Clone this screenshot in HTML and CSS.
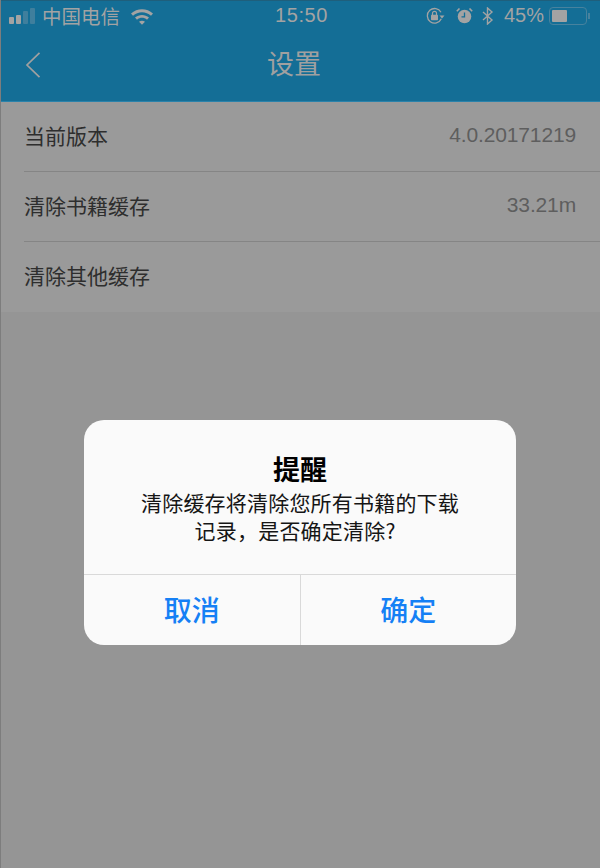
FILE: index.html
```html
<!DOCTYPE html>
<html>
  <head>
    <meta charset="utf-8">
    <title>设置</title>
    <link rel="stylesheet" href="styles.css">
  </head>

  <body>
    <div class="pagina">
      <div class="cabecera">
        <div class="estado">
          <div class="estado-izq">
            <div class="senal">
              <i class="on"></i><i class="on"></i><i class="off b3"></i><i class="off b4"></i>
            </div>
            <span class="operador">中国电信</span>
            <svg class="wifi" width="24" height="18" viewBox="0 0 24 18">
              <path d="M1 6.5C7 .8 17 .8 23 6.5l-2 2.2C16 4 8 4 3 8.7z" fill="#a3a3a3"/>
              <path d="M5 10.6c4-3.6 10-3.6 14 0l-2 2.1c-3-2.6-7-2.6-10 0z" fill="#a3a3a3"/>
              <path d="M9 14.7c1.800-1.400 4.200-1.400 6 0l-3 3z" fill="#a3a3a3"/>
            </svg>
          </div>
          <span class="hora">15:50</span>
          <div class="estado-der">
            <svg class="rotacion" width="19" height="18" viewBox="0 0 19 18">
              <path d="M15.300 11.800A7.300 7.300 0 1 1 15 5.200" fill="none" stroke="#a3a3a3" stroke-width="1.300"/>
              <path d="M13.500 8.500h5l-2.500 3z" fill="#a3a3a3"/>
              <rect x="5" y="7.800" width="7" height="5.400" rx=".8" fill="#a3a3a3"/>
              <path d="M6.500 8V6.300a2 2 0 0 1 4 0V8" fill="none" stroke="#a3a3a3" stroke-width="1.200"/>
            </svg>
            <svg class="alarma" width="17" height="17" viewBox="0 0 17 17">
              <circle cx="8.500" cy="9.500" r="6.800" fill="#a3a3a3"/>
              <path d="M8.500 5.500v4.300H5.500" fill="none" stroke="#146e96" stroke-width="1.300"/>
              <path d="M.8 4.300 3.500 1.500M16.200 4.300 13.500 1.500" stroke="#a3a3a3" stroke-width="1.600"/>
            </svg>
            <svg class="bluetooth" width="12" height="18" viewBox="0 0 12 18">
              <path d="M1 5l9 8-4.500 4V1L10 5l-9 8" fill="none" stroke="#a3a3a3" stroke-width="1.400"/>
            </svg>
            <span class="bateria-txt">45%</span>
            <div class="bateria">
              <div class="bateria-caja"><div class="bateria-nivel"></div></div>
              <div class="bateria-punta"></div>
            </div>
          </div>
        </div>
        <div class="barra">
          <svg class="atras" width="16" height="26" viewBox="0 0 16 26">
            <path d="M14.500 .8 2 13l12.500 12.200" fill="none" stroke="#a0a0a0" stroke-width="1.700"/>
          </svg>
          <span class="titulo">设置</span>
        </div>
      </div>

      <div class="lista">
        <div class="fila">
          <span>当前版本</span>
          <span class="valor">4.0.20171219</span>
        </div>
        <div class="fila">
          <span>清除书籍缓存</span>
          <span class="valor">33.21m</span>
        </div>
        <div class="fila">
          <span>清除其他缓存</span>
        </div>
      </div>

      <div class="capa">
        <div class="dialogo">
          <div class="dialogo-texto">
            <div class="dialogo-titulo">提醒</div>
            <div class="dialogo-msg">清除缓存将清除您所有书籍的下载<br>记录，是否确定清除?&nbsp;&nbsp;</div>
          </div>
          <div class="dialogo-botones">
            <div class="boton">取消</div>
            <div class="boton">确定</div>
          </div>
        </div>
      </div>
    </div>
  </body>
</html>
```

FILE: styles.css
```css
* {
  box-sizing: border-box;
}
html, body {
  margin: 0;
  padding: 0;
}
body {
  font-family: "Noto Sans CJK SC", "Liberation Sans", sans-serif;
  background-color: #959595;
}
.pagina {
  position: relative;
  width: 600px;
  height: 868px;
  overflow: hidden;
  border-left: 1px solid #7d7d7d;
}
.cabecera {
  height: 102px;
  background-color: #146e96;
  border-top: 1px solid #1f5f7c;
  border-bottom: 1px solid #2a82aa;
}
.estado {
  position: relative;
  display: flex;
  justify-content: space-between;
  align-items: center;
  height: 29px;
  padding: 0 10px 0 8px;
  color: #a3a3a3;
}
.estado-izq, .estado-der {
  display: flex;
  align-items: center;
}
.senal {
  display: flex;
  align-items: flex-end;
  gap: 2px;
  height: 17px;
  margin-right: 7px;
}
.senal i {
  display: block;
  width: 5px;
  border-radius: 1px;
}
.senal .on {
  background-color: #a3a3a3;
  height: 7px;
}
.senal .on + .on {
  height: 9px;
}
.senal .off {
  background-color: #3f7f9d;
}
.senal .b3 {
  height: 13px;
}
.senal .b4 {
  height: 16px;
}
.operador {
  font-size: 19.5px;
  line-height: 30px;
}
.wifi {
  margin-left: 10px;
}
.hora {
  position: absolute;
  left: 274px;
  font-family: "Liberation Sans", sans-serif;
  font-size: 20px;
  letter-spacing: .6px;
}
.rotacion {
  margin-right: 11px;
}
.alarma {
  margin-right: 9px;
}
.bateria-txt {
  margin-left: 10px;
  font-family: "Liberation Sans", sans-serif;
  font-size: 20px;
}
.bateria {
  display: flex;
  align-items: center;
  margin-left: 5px;
}
.bateria-caja {
  width: 38px;
  height: 18px;
  padding: 2px;
  border: 1px solid #47829e;
  border-radius: 4px;
}
.bateria-nivel {
  width: 15px;
  height: 12px;
  background-color: #a3a3a3;
  border-radius: 1px;
}
.bateria-punta {
  width: 2px;
  height: 6px;
  margin-left: 1px;
  background-color: #47829e;
}
.barra {
  position: relative;
  display: flex;
  justify-content: center;
  align-items: center;
  height: 70px;
  padding-bottom: 5px;
}
.atras {
  position: absolute;
  left: 24px;
  top: 22px;
}
.titulo {
  margin-left: -13px;
  font-size: 27px;
  color: #a0a0a0;
}
.lista {
  background-color: #9a9a9a;
}
.fila {
  display: flex;
  justify-content: space-between;
  align-items: center;
  height: 70px;
  margin-left: 23px;
  padding-right: 24px;
  padding-bottom: 4px;
  border-bottom: 1px solid #858585;
  font-size: 21px;
  color: #2e2e2e;
}
.fila:last-child {
  border-bottom: none;
}
.valor {
  font-family: "Liberation Sans", sans-serif;
  font-size: 21px;
  letter-spacing: -.15px;
  color: #5e5e5e;
}
.capa {
  position: absolute;
  top: 420px;
  left: 0;
  right: 0;
  display: flex;
  justify-content: center;
}
.dialogo {
  width: 432px;
  height: 225px;
  margin-left: -1px;
  background-color: #fafafa;
  border-radius: 20px;
  overflow: hidden;
}
.dialogo-texto {
  height: 155px;
  padding-top: 33px;
  text-align: center;
  border-bottom: 1px solid #d9d9d9;
}
.dialogo-titulo {
  font-size: 27px;
  font-weight: bold;
  line-height: 32px;
  color: #000;
}
.dialogo-msg {
  margin-top: 3px;
  font-size: 21px;
  letter-spacing: .2px;
  line-height: 28px;
  color: #151515;
}
.dialogo-botones {
  display: flex;
  height: 70px;
}
.boton {
  flex: 1;
  display: flex;
  justify-content: center;
  align-items: center;
  padding-bottom: 2px;
  font-size: 28px;
  font-weight: 500;
  color: #1580f5;
}
.boton + .boton {
  border-left: 1px solid #d9d9d9;
}
```
